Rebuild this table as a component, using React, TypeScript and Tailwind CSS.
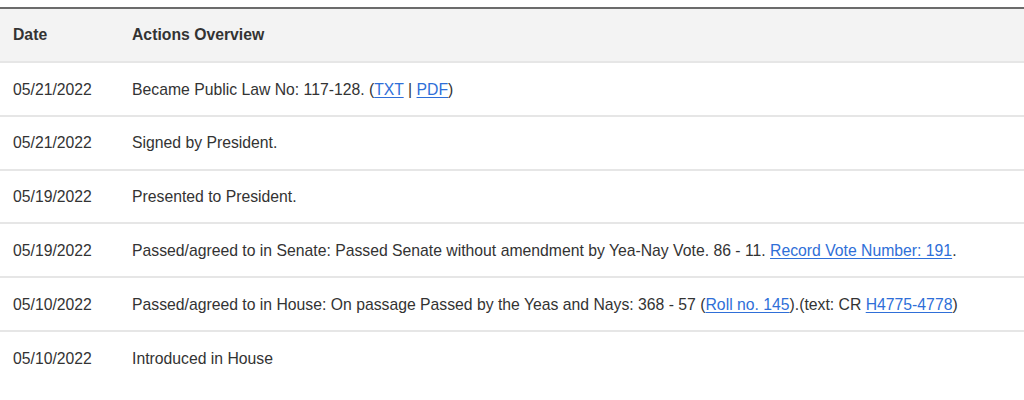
const LINK = 'text-[#2f6fd8] underline underline-offset-2'

const ROWS: { date: string; text: React.ReactNode }[] = [
  {
    date: '05/21/2022',
    text: (
      <>
        Became Public Law No: 117-128. (<a className={LINK}>TXT</a> | <a className={LINK}>PDF</a>)
      </>
    ),
  },
  { date: '05/21/2022', text: 'Signed by President.' },
  { date: '05/19/2022', text: 'Presented to President.' },
  {
    date: '05/19/2022',
    text: (
      <>
        Passed/agreed to in Senate: Passed Senate without amendment by Yea-Nay Vote. 86 - 11.{' '}
        <a className={LINK}>Record Vote Number: 191</a>.
      </>
    ),
  },
  {
    date: '05/10/2022',
    text: (
      <>
        Passed/agreed to in House: On passage Passed by the Yeas and Nays: 368 - 57 (
        <a className={LINK}>Roll no. 145</a>).(text: CR <a className={LINK}>H4775-4778</a>)
      </>
    ),
  },
  { date: '05/10/2022', text: 'Introduced in House' },
]

export default function App() {
  return (
    <div
      className="w-[1024px] h-[400px] bg-white pt-[7px] text-[#333] overflow-hidden"
      style={{ fontFamily: '"Liberation Sans", Arial, sans-serif' }}
    >
      <table className="w-full border-collapse text-[15.75px]">
        <thead>
          <tr className="bg-[#f3f3f3] border-t-2 border-[#6b6b6b] border-b-2 border-b-[#e6e6e6]">
            <th className="h-[54px] pl-[13px] w-[132px] text-left font-bold">Date</th>
            <th className="h-[54px] text-left font-bold">Actions Overview</th>
          </tr>
        </thead>
        <tbody>
          {ROWS.map((r, i) => (
            <tr key={i} className="border-b-2 border-[#e6e6e6] last:border-b-0">
              <td className="h-[53.75px] pl-[13px] pt-px align-middle">{r.date}</td>
              <td className="h-[53.75px] pt-px align-middle">{r.text}</td>
            </tr>
          ))}
        </tbody>
      </table>
    </div>
  )
}
